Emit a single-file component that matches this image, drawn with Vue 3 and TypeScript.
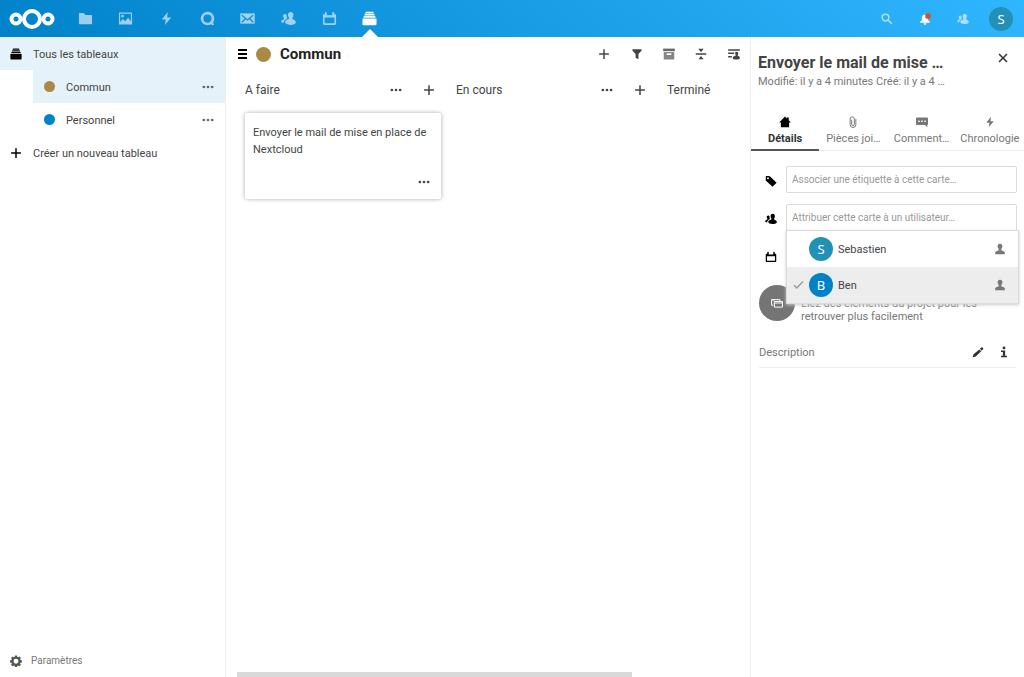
<script setup lang="ts">
import { ref } from 'vue'

interface App {
  icon: string
  label: string
}
interface Board {
  name: string
  color: string
}
interface Card {
  title: string
}
interface Stack {
  title: string
  cards: Card[]
}
interface User {
  name: string
  color: string
  assigned: boolean
}

const apps: App[] = [
  { icon: 'folder', label: 'Fichiers' },
  { icon: 'image', label: 'Photos' },
  { icon: 'bolt', label: 'Activité' },
  { icon: 'talk', label: 'Discussion' },
  { icon: 'mail', label: 'Mail' },
  { icon: 'contacts', label: 'Contacts' },
  { icon: 'calendar', label: 'Agenda' },
  { icon: 'deck', label: 'Deck' },
]
const activeApp = ref('deck')

const boards: Board[] = [
  { name: 'Commun', color: '#a98a45' },
  { name: 'Personnel', color: '#0082c9' },
]
const activeBoard = ref('Commun')

const stacks: Stack[] = [
  { title: 'A faire', cards: [{ title: 'Envoyer le mail de mise en place de Nextcloud' }] },
  { title: 'En cours', cards: [] },
  { title: 'Terminé', cards: [] },
]

const tools: App[] = [
  { icon: 'plus', label: 'Ajouter une liste' },
  { icon: 'filter', label: 'Filtrer' },
  { icon: 'archive', label: 'Cartes archivées' },
  { icon: 'compact', label: 'Mode compact' },
  { icon: 'details', label: 'Détails du tableau' },
]

const tabs: App[] = [
  { icon: 'home', label: 'Détails' },
  { icon: 'clip', label: 'Pièces joi…' },
  { icon: 'comment', label: 'Comment…' },
  { icon: 'bolt', label: 'Chronologie' },
]
const activeTab = ref('home')

const users = ref<User[]>([
  { name: 'Sebastien', color: '#2390b5', assigned: false },
  { name: 'Ben', color: '#0082c9', assigned: true },
])
</script>

<template>
  <svg class="sprite" aria-hidden="true">
    <symbol id="i-folder" viewBox="0 0 16 16"><path d="M1.500 2a.5.5 0 0 0-.5.5v11.200c0 .3.200.5.500.500h13c.3 0 .5-.2.5-.5V4.700a.5.5 0 0 0-.5-.5H8L6 2z" /></symbol>
    <symbol id="i-image" viewBox="0 0 16 16"><path fill-rule="evenodd" d="M1.500 1.500a.5.5 0 0 0-.5.5v12c0 .3.200.5.500.500h13c.3 0 .5-.2.5-.5V2a.5.5 0 0 0-.5-.5zM2.300 2.800h11.400V11l-3-3.800L7.700 11 5.200 8.600l-2.900 3.200zM4.800 4a1.500 1.500 0 1 0 0 3 1.500 1.500 0 0 0 0-3z" /></symbol>
    <symbol id="i-bolt" viewBox="0 0 16 16"><path d="M9.300 1 3 9h4.200L6.300 15 13 7H8.700z" /></symbol>
    <symbol id="i-talk" viewBox="0 0 16 16"><path fill-rule="evenodd" d="M8 .9A7.100 7.100 0 1 0 11.700 14c.9.800 2.200 1.200 3.200 1-.3-.8-.7-2.100-.8-3.300A7.100 7.100 0 0 0 8 .9zm0 2.700a4.400 4.400 0 1 1 0 8.800 4.400 4.400 0 0 1 0-8.800z" /></symbol>
    <symbol id="i-mail" viewBox="0 0 16 16"><path d="M.3 2.500h15.400v11H.3z" /><path class="cut" d="m2 4.500 6 5 6-5M2 12l3.800-4M14 12l-3.800-4" /></symbol>
    <symbol id="i-contacts" viewBox="0 0 16 16"><path d="M10.300 1C8.400 1 7.300 2.400 7.500 4.300c.1 1.200.3 2 .9 2.700.2.400.1 1-.1 1.500-1.500.7-4 1.300-4 3.300 0 1.900 2.600 3 5.700 3s5.800-.9 5.800-2.800c0-2.300-2.200-2.600-3.500-3.500-.2-.5-.2-1 .1-1.500.5-.7.7-1.500.8-2.700C13.400 2.400 12.200 1 10.300 1zM4.400 3.300c-1.400 0-2.200 1-2.100 2.300.1.900.3 1.500.8 2 .2.400.2.800 0 1.100C1.900 9.300.2 9.700.2 11.100c0 .9 1.100 1.400 2.600 1.600.1-2.500 1.800-3.800 4-4.800C6 7.200 6.200 5.900 6 4.300a2 2 0 0 0-1.600-1z" /></symbol>
    <symbol id="i-calendar" viewBox="0 0 16 16"><path fill-rule="evenodd" d="M4 1a1 1 0 0 0-1 1v1.500H2c-.6 0-1 .4-1 1v8.800c0 .9.600 1.500 1.500 1.500h11c.9 0 1.500-.6 1.500-1.500V4.500c0-.6-.4-1-1-1h-1V2a1 1 0 0 0-2 0v2.500H5V2a1 1 0 0 0-1-1zM2.700 7h10.600v6H2.700z" /></symbol>
    <symbol id="i-deck" viewBox="0 0 16 16"><path d="M4 .8h8l.5 1.500h-9zM3 3h10l.5 1.700h-11zM2 5.400h12l.5 1.700h-13zM.5 7.900h15v6.300c0 .6-.4 1-1 1h-13c-.6 0-1-.4-1-1z" /></symbol>
    <symbol id="i-search" viewBox="0 0 16 16"><path class="line" d="M10.500 6a4.500 4.500 0 1 1-9 0 4.500 4.500 0 0 1 9 0zM9.500 9.500l5 5" /></symbol>
    <symbol id="i-bell" viewBox="0 0 16 16"><path d="M7.500 2C5 2.500 3.800 4.300 3.800 6.500v3L1.500 11.500V13h13v-1.500l-2.300-2v-3C12 4 10.500 2.500 7.500 2zM6 13.500a2 2 0 0 0 4 0z" /><circle class="alert" cx="12" cy="4" r="3.800" /></symbol>
    <symbol id="i-plus" viewBox="0 0 16 16"><path d="M7 1.500h2V7h5.500v2H9v5.500H7V9H1.500V7H7z" /></symbol>
    <symbol id="i-more" viewBox="0 0 16 16"><circle cx="2.500" cy="8" r="1.800" /><circle cx="8" cy="8" r="1.800" /><circle cx="13.500" cy="8" r="1.800" /></symbol>
    <symbol id="i-menu" viewBox="0 0 12 12"><path d="M1 1h9v2H1zm0 4h9v2H1zm0 4h9v2H1z" /></symbol>
    <symbol id="i-filter" viewBox="0 0 16 16"><path d="M2 1.500h12v2L9.900 8v7L6.100 13V8L2 3.500z" /></symbol>
    <symbol id="i-archive" viewBox="0 0 16 16"><path opacity=".8" d="M.2.800h15.600v3.400H.2z" /><path fill-rule="evenodd" opacity=".65" d="M1 5.200h14v10H1zM5 7v2.200h6V7z" /></symbol>
    <symbol id="i-compact" viewBox="0 0 16 16"><path d="M1 7h14v2H1zM4.500 1h7L8 5.500zM4.500 15h7L8 10.500z" /></symbol>
    <symbol id="i-details" viewBox="0 0 16 16"><path d="M.2 1.500h15.600v2H.2zM.2 6h8v2h-8zM.2 10.500h5v2h-5zM11.500 5c-1.400 0-2.200 1-2 2.400.1.900.4 1.500.7 2 .1.400 0 .7-.1 1-1.500.6-3.900 1-3.900 2.800 0 1.400 2.300 2.200 4.800 2.200s4.900-.8 4.900-2.200c0-1.600-1.800-2.200-2.800-2.800-.2-.3-.2-.6 0-1 .3-.5.5-1.100.6-2C13.900 6 12.900 5 11.500 5z" /></symbol>
    <symbol id="i-close" viewBox="0 0 16 16"><path d="m3.400 2 4.600 4.600L12.600 2 14 3.400 9.400 8l4.600 4.600-1.400 1.400L8 9.400 3.400 14 2 12.600 6.600 8 2 3.400z" /></symbol>
    <symbol id="i-home" viewBox="0 0 16 16"><path d="M8 .8.200 8.500H2.500V15h11V8.500h2.300L13 5.700V2h-2.500v1.300z" /></symbol>
    <symbol id="i-clip" viewBox="0 0 16 16"><path class="thin" d="M11.800 4v7.500a3.800 3.800 0 0 1-7.600 0V4a2.800 2.800 0 0 1 5.600 0v7a1.800 1.800 0 0 1-3.600 0V5" /></symbol>
    <symbol id="i-comment" viewBox="0 0 16 16"><path fill-rule="evenodd" d="M1.500 2C.7 2 0 2.700 0 3.500v7c0 .8.700 1.500 1.500 1.500H12l3 3v-3c.6-.2 1-.8 1-1.500v-7c0-.8-.7-1.500-1.500-1.500zM3 6h2v2H3zm4 0h2v2H7zm4 0h2v2h-2z" /></symbol>
    <symbol id="i-tag" viewBox="0 0 16 16"><path fill-rule="evenodd" d="M1 2.500v4.800L10 15.500l5.500-5.200L6.800 2C6.300 1.500 5.600 1.200 5 1.200H2.300C1.600 1.200 1 1.800 1 2.500zM4 3a1.300 1.300 0 1 1 0 2.600A1.300 1.300 0 0 1 4 3z" /></symbol>
    <symbol id="i-user" viewBox="0 0 16 16"><path d="M8 1C5.800 1 4.600 2.600 4.800 4.800c.1 1.300.8 2.200 1.300 3 .3.500.2 1.700 0 2.300-1.600.7-4.600.6-4.600 2.900v2h13v-2c0-2.300-3-2.200-4.600-2.900-.2-.6-.3-1.800 0-2.300.5-.8 1.200-1.700 1.300-3C11.400 2.600 10.200 1 8 1z" /></symbol>
    <symbol id="i-check" viewBox="0 0 16 16"><path class="line" d="m1.500 8.500 4 4L14.500 3" /></symbol>
    <symbol id="i-project" viewBox="0 0 16 16"><path class="thin" d="M4.500 6h10.800v7.500H4.500zM3 11H.8V3.500H12v2M4.500 8h10.800" /><path d="M.8 3h4.500v1.500H.8z" /></symbol>
    <symbol id="i-pencil" viewBox="0 0 16 16"><path d="M.8 15.200 2 11l7.800-6.500 2.500 2.500L5 14zM10.600 3.800l2-1.700c.5-.4 1-.4 1.400 0l.8.800c.4.400.4 1 0 1.400l-1.800 2z" /></symbol>
    <symbol id="i-info" viewBox="0 0 16 16"><circle cx="8" cy="2.500" r="1.900" /><path d="M4 6h5.500v7H12v2H4v-2h2.500V8H4z" /></symbol>
    <symbol id="i-gear" viewBox="0 0 16 16"><path fill-rule="evenodd" d="M6.600.5h2.800l.4 2 1 .5 1.800-1.100 2 2L13.400 5.700l.5 1 1.900.4v2.800l-2 .4-.4 1 1.100 1.800-2 2-1.800-1.100-1 .5-.4 1.900H6.600l-.4-2-1-.4-1.800 1.100-2-2 1.100-1.800-.5-1-1.900-.4V7.100l2-.4.400-1-1.100-1.800 2-2 1.800 1.100 1-.5zM8 4.900a3.300 3.300 0 1 0 0 6.600 3.300 3.300 0 0 0 0-6.600z" /></symbol>
  </svg>

  <div class="page">
    <header class="topbar">
      <a class="logo" href="#" aria-label="Nextcloud">
        <svg viewBox="0 0 46 22" aria-hidden="true">
          <circle cx="23" cy="11" r="8" />
          <circle cx="7" cy="11" r="4.500" />
          <circle cx="39" cy="11" r="4.500" />
        </svg>
      </a>
      <nav class="apps">
        <a
          v-for="app in apps"
          :key="app.icon"
          href="#"
          :aria-label="app.label"
          :class="{ active: app.icon === activeApp }"
          @click.prevent="activeApp = app.icon"
        >
          <svg class="icon"><use :href="'#i-' + app.icon" /></svg>
        </a>
      </nav>
      <div class="account">
        <button type="button" aria-label="Rechercher"><svg class="icon dim"><use href="#i-search" /></svg></button>
        <button type="button" aria-label="Notifications"><svg class="icon"><use href="#i-bell" /></svg></button>
        <button type="button" aria-label="Contacts"><svg class="icon dim"><use href="#i-contacts" /></svg></button>
        <button type="button" aria-label="Compte"><span class="avatar me">S</span></button>
      </div>
    </header>

    <div class="body">
      <aside class="sidebar">
        <ul>
          <li class="row all">
            <svg class="icon"><use href="#i-deck" /></svg>
            <a href="#">Tous les tableaux</a>
          </li>
          <li
            v-for="board in boards"
            :key="board.name"
            class="row board"
            :class="{ active: board.name === activeBoard }"
          >
            <span class="dot" :style="{ background: board.color }"></span>
            <a href="#" @click.prevent="activeBoard = board.name">{{ board.name }}</a>
            <button type="button" aria-label="Actions"><svg class="icon"><use href="#i-more" /></svg></button>
          </li>
          <li class="row">
            <svg class="icon"><use href="#i-plus" /></svg>
            <a href="#">Créer un nouveau tableau</a>
          </li>
        </ul>
        <button class="settings" type="button">
          <svg class="icon"><use href="#i-gear" /></svg>Paramètres
        </button>
      </aside>

      <main class="content">
        <div class="board-head">
          <button class="menu" type="button" aria-label="Navigation"><svg class="icon"><use href="#i-menu" /></svg></button>
          <span class="dot"></span>
          <h1>Commun</h1>
          <div class="tools">
            <button v-for="tool in tools" :key="tool.icon" type="button" :aria-label="tool.label">
              <svg class="icon"><use :href="'#i-' + tool.icon" /></svg>
            </button>
          </div>
        </div>
        <div class="stacks">
          <section v-for="stack in stacks" :key="stack.title" class="stack">
            <div class="stack-head">
              <h2>{{ stack.title }}</h2>
              <button type="button" aria-label="Actions"><svg class="icon"><use href="#i-more" /></svg></button>
              <button type="button" aria-label="Ajouter une carte"><svg class="icon"><use href="#i-plus" /></svg></button>
            </div>
            <article v-for="card in stack.cards" :key="card.title" class="card">
              <h3>{{ card.title }}</h3>
              <button type="button" aria-label="Actions"><svg class="icon"><use href="#i-more" /></svg></button>
            </article>
          </section>
        </div>
        <div class="scroll"><div class="thumb"></div></div>
      </main>

      <aside class="panel">
        <div class="panel-head">
          <div class="titles">
            <h2>Envoyer le mail de mise …</h2>
            <p>Modifié: il y a 4 minutes Créé: il y a 4 …</p>
          </div>
          <button type="button" aria-label="Fermer"><svg class="icon"><use href="#i-close" /></svg></button>
        </div>
        <div class="tabs" role="tablist">
          <button
            v-for="tab in tabs"
            :key="tab.icon"
            type="button"
            role="tab"
            :aria-selected="tab.icon === activeTab"
            :class="{ active: tab.icon === activeTab }"
            @click="activeTab = tab.icon"
          >
            <svg class="icon"><use :href="'#i-' + tab.icon" /></svg>
            <span>{{ tab.label }}</span>
          </button>
        </div>
        <div class="fields">
          <div class="field">
            <label for="tags" aria-label="Étiquettes"><svg class="icon"><use href="#i-tag" /></svg></label>
            <input id="tags" type="text" placeholder="Associer une étiquette à cette carte…" />
          </div>
          <div class="field">
            <label for="users" aria-label="Utilisateurs"><svg class="icon"><use href="#i-contacts" /></svg></label>
            <input id="users" type="text" placeholder="Attribuer cette carte à un utilisateur…" />
            <div class="dropdown" role="listbox">
              <button
                v-for="user in users"
                :key="user.name"
                type="button"
                role="option"
                :aria-selected="user.assigned"
                :class="{ assigned: user.assigned }"
                @click="user.assigned = !user.assigned"
              >
                <svg class="icon check"><use href="#i-check" /></svg>
                <span class="avatar" :style="{ background: user.color }">{{ user.name.charAt(0) }}</span>
                <span class="name">{{ user.name }}</span>
                <svg class="icon"><use href="#i-user" /></svg>
              </button>
            </div>
          </div>
          <div class="field">
            <span class="lead"><svg class="icon"><use href="#i-calendar" /></svg></span>
          </div>
        </div>
        <div class="project">
          <span class="round"><svg class="icon"><use href="#i-project" /></svg></span>
          <p>Liez des éléments du projet pour les retrouver plus facilement</p>
        </div>
        <div class="description">
          <h3>Description</h3>
          <button type="button" aria-label="Modifier"><svg class="icon"><use href="#i-pencil" /></svg></button>
          <button type="button" aria-label="Aide"><svg class="icon"><use href="#i-info" /></svg></button>
        </div>
      </aside>
    </div>
  </div>
</template>

<style>
body {
  margin: 0;
}
</style>

<style scoped>
* {
  box-sizing: border-box;
}
.sprite {
  position: absolute;
  width: 0;
  height: 0;
}
.page {
  display: flex;
  flex-direction: column;
  height: 100vh;
  overflow: hidden;
  background: #fff;
  color: #444;
  font-family: Roboto, "Open Sans", sans-serif;
  font-size: 11px;
}
h1,
h2,
h3,
p,
ul {
  margin: 0;
  padding: 0;
  font-weight: 400;
}
li {
  list-style: none;
}
a {
  color: inherit;
  text-decoration: none;
}
button {
  display: flex;
  align-items: center;
  justify-content: center;
  padding: 0;
  border: 0;
  background: none;
  color: inherit;
  font: inherit;
  cursor: pointer;
}
.icon {
  flex: none;
  width: 12px;
  height: 12px;
  fill: currentColor;
}
.line {
  fill: none;
  stroke: currentColor;
  stroke-width: 2;
}
.thin {
  fill: none;
  stroke: currentColor;
  stroke-width: 1.3;
}
.cut {
  fill: none;
  stroke: #1089d0;
  stroke-width: 1.3;
}
.alert {
  fill: #d8502b;
}
.avatar {
  display: flex;
  flex: none;
  align-items: center;
  justify-content: center;
  width: 24px;
  height: 24px;
  border-radius: 50%;
  color: #fff;
  font-family: "Noto Sans", sans-serif;
  font-size: 13px;
}
.me {
  background: #2390b5;
}

.topbar {
  display: flex;
  flex: none;
  align-items: center;
  height: 37px;
  padding: 0 4px 0 9px;
  background: linear-gradient(40deg, #0082c9, #30b6ff);
  color: #fff;
}
.logo {
  width: 56px;
}
.logo svg {
  display: block;
  width: 46px;
  height: 22px;
  fill: none;
  stroke: #fff;
  stroke-width: 4;
}
.apps {
  display: grid;
  grid-template-columns: repeat(8, 1fr);
  width: 325px;
  height: 100%;
}
.apps a {
  position: relative;
  display: flex;
  align-items: center;
  justify-content: center;
  opacity: 0.6;
}
.apps .icon {
  width: 15px;
  height: 15px;
}
.apps .active {
  opacity: 1;
}
.apps .active::after {
  content: "";
  position: absolute;
  bottom: 0;
  border: 8px solid transparent;
  border-top: 0;
  border-bottom-color: #fff;
}
.account {
  display: flex;
  margin-left: auto;
}
.account button {
  width: 38px;
  height: 37px;
}
.dim {
  opacity: 0.6;
}

.body {
  display: flex;
  flex: 1;
  min-height: 0;
}
.sidebar {
  display: flex;
  flex: none;
  flex-direction: column;
  width: 226px;
  border-right: 1px solid #ededed;
}
.row {
  display: flex;
  align-items: center;
  height: 33px;
  padding-left: 10px;
}
.row a {
  padding-top: 2px;
}
.row > .icon {
  margin-right: 11px;
  color: #000;
}
.all,
.board.active {
  background: #e6f2fa;
}
.board {
  margin-left: 33px;
  padding-left: 11px;
}
.board a {
  flex: 1;
}
.dot {
  flex: none;
  width: 11px;
  height: 11px;
  margin-right: 11px;
  border-radius: 50%;
}
.board button {
  width: 34px;
  height: 33px;
  color: #666;
}
.settings {
  justify-content: flex-start;
  gap: 9px;
  height: 33px;
  margin-top: auto;
  padding-left: 10px;
  color: #777;
  font-size: 10px;
}
.settings .icon {
  color: #555;
}

.content {
  display: flex;
  flex: 1;
  flex-direction: column;
  min-width: 0;
  color: #444;
}
.board-head {
  display: flex;
  flex: none;
  align-items: center;
  height: 34px;
  padding-left: 11px;
}
.menu {
  margin-right: 7px;
  color: #000;
}
.board-head .dot {
  width: 15px;
  height: 15px;
  margin-right: 9px;
  background: #a98a45;
}
h1 {
  color: #222;
  font-size: 15px;
  font-weight: 700;
}
.tools {
  display: grid;
  grid-template-columns: repeat(5, 1fr);
  width: 162px;
  margin-left: auto;
}
.tools button {
  height: 34px;
}
.stacks {
  display: flex;
  flex: 1;
  gap: 15px;
  min-height: 0;
  padding-left: 19px;
  overflow: hidden;
}
.stack {
  flex: none;
  width: 196px;
}
.stack-head {
  display: flex;
  align-items: center;
  height: 37px;
}
.stack-head h2 {
  flex: 1;
  font-size: 12px;
}
.stack-head button {
  width: 33px;
  height: 33px;
}
.stack-head button:last-child {
  margin-right: -4px;
}
.card {
  display: flex;
  flex-direction: column;
  margin-top: 5px;
  padding: 11px 8px 10px;
  border-radius: 2px;
  box-shadow: 0 0 4px #aaa;
}
.card h3 {
  min-height: 51px;
  font-size: 11px;
  line-height: 17px;
}
.card button {
  align-self: flex-end;
  width: 18px;
  height: 14px;
}
.scroll {
  flex: none;
  height: 5px;
  padding-left: 11px;
}
.thumb {
  width: 77%;
  height: 5px;
  background: #d9d9d9;
}

.panel {
  flex: none;
  width: 274px;
  border-left: 1px solid #ededed;
  color: #777;
}
.panel-head {
  display: flex;
  height: 76px;
  padding: 14px 14px 0 7px;
}
.titles {
  white-space: nowrap;
}
.titles h2 {
  color: #444;
  font-size: 16px;
  font-weight: 700;
  line-height: 23px;
}
.titles p {
  font-size: 11px;
  line-height: 16px;
}
.panel-head button {
  width: 14px;
  height: 14px;
  margin-left: auto;
  color: #333;
}
.tabs {
  display: grid;
  grid-template-columns: repeat(4, 1fr);
  height: 38px;
  border-bottom: 1px solid #ededed;
}
.tabs button {
  flex-direction: column;
  gap: 3px;
  min-width: 0;
  height: 38px;
  border-bottom: 2px solid transparent;
  line-height: 16px;
}
.tabs .active {
  border-bottom-color: #555;
  color: #333;
  font-weight: 700;
}
.tabs .active .icon {
  color: #000;
}
.fields {
  padding: 15px 7px 0;
}
.field {
  position: relative;
  display: flex;
  align-items: center;
  height: 27px;
  margin-bottom: 11px;
}
.field label,
.lead {
  display: flex;
  width: 28px;
  padding-top: 2px;
  padding-left: 7px;
  color: #000;
}
.field input {
  flex: 1;
  min-width: 0;
  height: 27px;
  padding: 0 5px;
  border: 1px solid #dbdbdb;
  border-radius: 2px;
  background: #fff;
  font: inherit;
  font-size: 10px;
}
.field input::placeholder {
  color: #999;
}
.dropdown {
  position: absolute;
  z-index: 1;
  top: 26px;
  right: -2px;
  left: 28px;
  border: 1px solid #dbdbdb;
  background: #fff;
  box-shadow: 0 1px 3px #ccc;
}
.dropdown button {
  width: 100%;
  height: 36px;
  padding: 0 12px 0 6px;
  color: #444;
}
.dropdown .assigned {
  background: #ededed;
}
.dropdown .icon {
  color: #777;
}
.dropdown .check {
  width: 11px;
  margin-right: 5px;
  color: #999;
  visibility: hidden;
}
.dropdown .assigned .check {
  visibility: visible;
}
.name {
  flex: 1;
  margin-left: 5px;
  text-align: left;
}
.project {
  display: flex;
  align-items: center;
  gap: 6px;
  margin-top: 14px;
  padding: 0 20px 0 8px;
}
.round {
  display: flex;
  flex: none;
  align-items: center;
  justify-content: center;
  width: 36px;
  height: 36px;
  border-radius: 50%;
  background: #757575;
  color: #fff;
}
.project p {
  margin-top: 14px;
  line-height: 13px;
}
.description {
  display: flex;
  align-items: center;
  height: 31px;
  margin: 14px 8px 0;
  border-bottom: 1px solid #ededed;
}
.description h3 {
  flex: 1;
  font-size: 11px;
}
.description button {
  width: 28px;
  height: 28px;
  margin-right: -2px;
  color: #333;
}
</style>
